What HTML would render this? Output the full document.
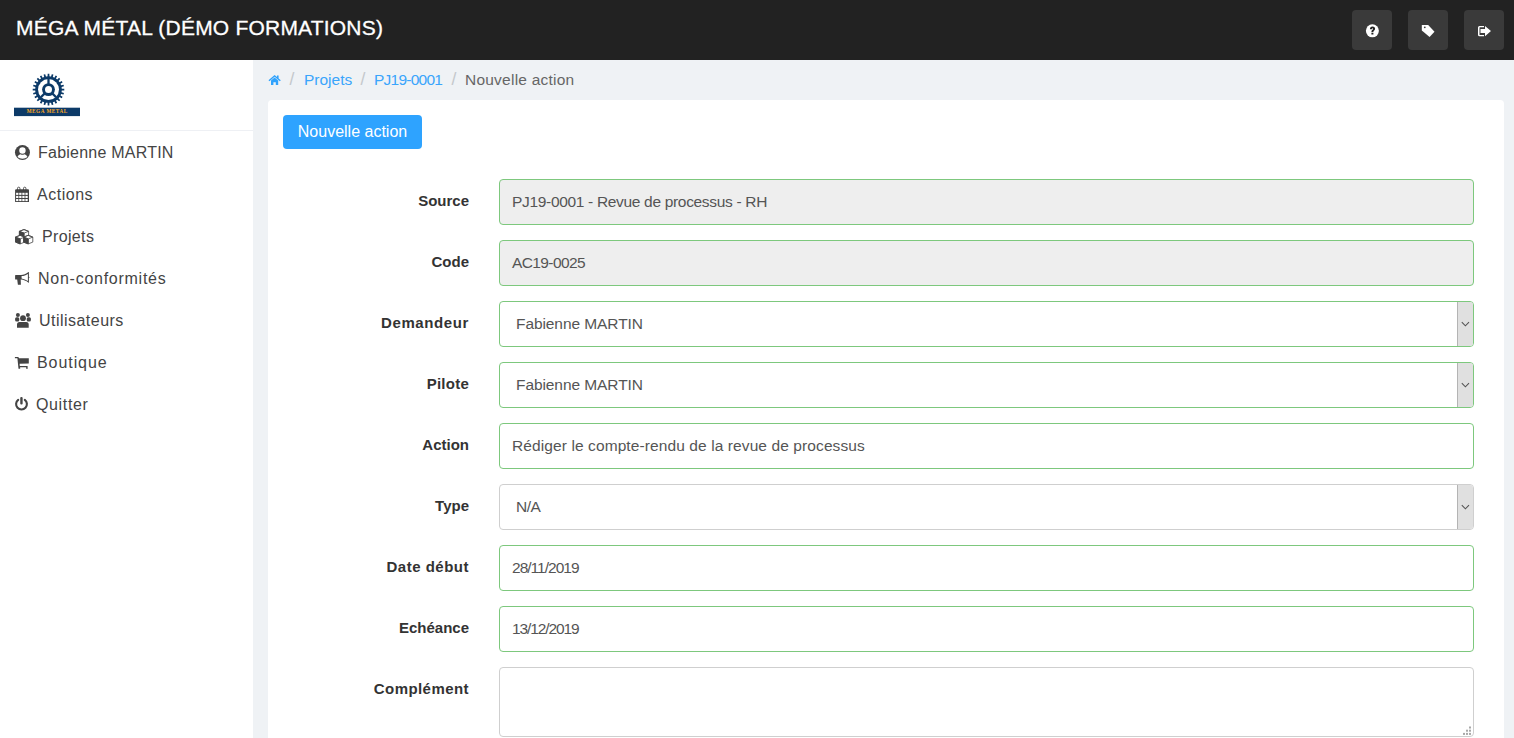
<!DOCTYPE html>
<html><head><meta charset="utf-8">
<style>
*{box-sizing:border-box;margin:0;padding:0}
html,body{width:1514px;height:738px;overflow:hidden}
body{font-family:"Liberation Sans",sans-serif;background:#eff2f5;position:relative;color:#555}
.ov{position:absolute;left:0;top:0;z-index:5}
.hdr{position:absolute;left:0;top:0;width:1514px;height:60px;background:#222;}
.hdr .title{position:absolute;left:16px;top:16px;font-size:21px;line-height:24px;color:#fff;white-space:nowrap;-webkit-text-stroke:0.3px #fff}
.hbtn{position:absolute;top:10px;width:40px;height:40px;background:#3a3a3a;border-radius:4px}
.side{position:absolute;left:0;top:60px;width:253px;height:678px;background:#fff}
.sep{position:absolute;left:0;top:70px;width:253px;height:1px;background:#eef0f4}
.mi{position:absolute;font-size:16px;line-height:20px;color:#444;white-space:nowrap}
.bc{position:absolute;top:70px;font-size:15.5px;line-height:20px;white-space:nowrap}
.bl{color:#3aa5fc}
.bs{color:#c4c8cc;font-size:17.5px;top:69px;line-height:20px}
.bcur{color:#666}
.card{position:absolute;left:268px;top:100px;width:1236px;height:700px;background:#fff;border-radius:4px}
.btn{position:absolute;left:283px;top:115px;width:139px;height:34px;background:#2ea3ff;border-radius:4px;color:#fff;font-size:16px;line-height:34px;text-align:center;white-space:nowrap}
.lbl{position:absolute;right:1045px;font-size:15px;font-weight:bold;color:#333;line-height:20px;white-space:nowrap;text-align:right}
.inp{position:absolute;left:499px;width:975px;height:46px;border:1px solid #7dc87d;border-radius:4px;background:#fff;font-size:15.5px;color:#555;line-height:20px;padding:12px 12px;white-space:nowrap}
.inp.ro{background:#eeeeee}
.inp.sel{padding-left:16px}
.inp.gray{border-color:#cfcfcf}
.arr{position:absolute;right:0;top:0;width:16px;height:44px;background:#e0e0e0;border-left:1px solid #b4b4b4;border-radius:0 3px 3px 0}
</style></head><body>
<div class="hdr">
  <div class="title" style="letter-spacing:0.21px">MÉGA MÉTAL (DÉMO FORMATIONS)</div>
  <div class="hbtn" style="left:1352px"></div>
  <div class="hbtn" style="left:1408px"></div>
  <div class="hbtn" style="left:1464px"></div>
</div>
<div class="side"><div class="sep"></div></div>
<div class="mi" style="top:143px;left:38px;letter-spacing:0.23px">Fabienne MARTIN</div>
<div class="mi" style="top:185px;left:37px;letter-spacing:0.52px">Actions</div>
<div class="mi" style="top:227px;left:42px;letter-spacing:0.35px">Projets</div>
<div class="mi" style="top:269px;left:38px;letter-spacing:0.74px">Non-conformités</div>
<div class="mi" style="top:311px;left:39px;letter-spacing:0.47px">Utilisateurs</div>
<div class="mi" style="top:353px;left:37px;letter-spacing:0.93px">Boutique</div>
<div class="mi" style="top:395px;left:36px;letter-spacing:0.64px">Quitter</div>

<div class="bc bs" style="left:289.5px">/</div>
<div class="bc bl" style="left:304px">Projets</div>
<div class="bc bs" style="left:360.5px">/</div>
<div class="bc bl" style="left:374px;letter-spacing:-0.76px">PJ19-0001</div>
<div class="bc bs" style="left:451.5px">/</div>
<div class="bc bcur" style="left:465px;letter-spacing:0.23px">Nouvelle action</div>
<div class="card"></div>
<div class="btn" style="letter-spacing:0px">Nouvelle action</div>

<div class="lbl" style="top:191px">Source</div>
<div class="inp ro" style="top:179px;letter-spacing:-0.32px">PJ19-0001 - Revue de processus - RH</div>
<div class="lbl" style="top:252px">Code</div>
<div class="inp ro" style="top:240px;letter-spacing:-0.61px">AC19-0025</div>
<div class="lbl" style="top:313px;letter-spacing:0.6px">Demandeur</div>
<div class="inp sel" style="top:301px;letter-spacing:-0.08px">Fabienne MARTIN<div class="arr"></div></div>
<div class="lbl" style="top:374px;letter-spacing:0.24px">Pilote</div>
<div class="inp sel" style="top:362px;letter-spacing:-0.08px">Fabienne MARTIN<div class="arr"></div></div>
<div class="lbl" style="top:435px">Action</div>
<div class="inp" style="top:423px;letter-spacing:0.1px">Rédiger le compte-rendu de la revue de processus</div>
<div class="lbl" style="top:496px">Type</div>
<div class="inp sel gray" style="top:484px;letter-spacing:-0.45px">N/A<div class="arr"></div></div>
<div class="lbl" style="top:557px;letter-spacing:0.5px">Date début</div>
<div class="inp" style="top:545px;letter-spacing:-0.98px">28/11/2019</div>
<div class="lbl" style="top:618px">Echéance</div>
<div class="inp" style="top:606px;letter-spacing:-1.11px">13/12/2019</div>
<div class="lbl" style="top:679px;letter-spacing:0.44px">Complément</div>
<div class="inp gray" style="top:667px;height:70px"></div>
<svg class="ov" width="1514" height="738" viewBox="0 0 1514 738">
<!-- logo -->
<path d="M46.76,76.41 L47.56,76.33 L47.67,73.82 L49.33,73.82 L49.44,76.33 L50.24,76.41 L51.03,76.54 L51.79,74.15 L53.38,74.57 L52.84,77.03 L53.59,77.31 L54.32,77.64 L55.67,75.52 L57.11,76.35 L55.95,78.58 L56.60,79.05 L57.22,79.55 L59.07,77.86 L60.24,79.03 L58.55,80.88 L59.05,81.50 L59.52,82.15 L61.75,80.99 L62.58,82.43 L60.46,83.78 L60.79,84.51 L61.07,85.26 L63.53,84.72 L63.95,86.31 L61.56,87.07 L61.69,87.86 L61.77,88.66 L64.28,88.77 L64.28,90.43 L61.77,90.54 L61.69,91.34 L61.56,92.13 L63.95,92.89 L63.53,94.48 L61.07,93.94 L60.79,94.69 L60.46,95.42 L62.58,96.77 L61.75,98.21 L59.52,97.05 L59.05,97.70 L58.55,98.32 L60.24,100.17 L59.07,101.34 L57.22,99.65 L56.60,100.15 L55.95,100.62 L57.11,102.85 L55.67,103.68 L54.32,101.56 L53.59,101.89 L52.84,102.17 L53.38,104.63 L51.79,105.05 L51.03,102.66 L50.24,102.79 L49.44,102.87 L49.33,105.38 L47.67,105.38 L47.56,102.87 L46.76,102.79 L45.97,102.66 L45.21,105.05 L43.62,104.63 L44.16,102.17 L43.41,101.89 L42.68,101.56 L41.33,103.68 L39.89,102.85 L41.05,100.62 L40.40,100.15 L39.78,99.65 L37.93,101.34 L36.76,100.17 L38.45,98.32 L37.95,97.70 L37.48,97.05 L35.25,98.21 L34.42,96.77 L36.54,95.42 L36.21,94.69 L35.93,93.94 L33.47,94.48 L33.05,92.89 L35.44,92.13 L35.31,91.34 L35.23,90.54 L32.72,90.43 L32.72,88.77 L35.23,88.66 L35.31,87.86 L35.44,87.07 L33.05,86.31 L33.47,84.72 L35.93,85.26 L36.21,84.51 L36.54,83.78 L34.42,82.43 L35.25,80.99 L37.48,82.15 L37.95,81.50 L38.45,80.88 L36.76,79.03 L37.93,77.86 L39.78,79.55 L40.40,79.05 L41.05,78.58 L39.89,76.35 L41.33,75.52 L42.68,77.64 L43.41,77.31 L44.16,77.03 L43.62,74.57 L45.21,74.15 L45.97,76.54Z" fill="#0c3a68"/>
<circle cx="48.5" cy="89.6" r="10.5" fill="#fff"/>
<g stroke="#0c3a68" stroke-width="2.3" stroke-linecap="butt">
<line x1="48.5" y1="89.6" x2="48.5" y2="78.5"/>
<line x1="48.5" y1="89.6" x2="40.86" y2="97.24"/>
<line x1="48.5" y1="89.6" x2="56.14" y2="97.24"/>
</g>
<circle cx="48.5" cy="89.6" r="6.4" fill="#0c3a68"/>
<circle cx="48.5" cy="89.6" r="3.5" fill="#fff"/>
<rect x="14" y="107.7" width="66" height="8.4" fill="#0c3a68"/>
<text x="47.2" y="113.2" font-family="Liberation Serif" font-weight="bold" font-size="6" fill="#ffa91f" text-anchor="middle" letter-spacing="0.6" textLength="41" lengthAdjust="spacingAndGlyphs">MEGA METAL</text>
<!-- header icons -->
<circle cx="1372.4" cy="30.8" r="6.5" fill="#fff"/>
<path d="M1369.9,29.3 Q1369.9,26.4 1372.5,26.4 Q1375.2,26.5 1375.1,28.8 Q1375,30.1 1373.9,30.8 Q1373.4,31.1 1373.4,32 L1371.4,32 Q1371.3,30.5 1372.4,29.8 Q1373,29.4 1373,28.9 Q1373,28.3 1372.4,28.3 Q1371.9,28.3 1371.9,29.3Z" fill="#222"/>
<rect x="1371.4" y="32.7" width="2" height="1.8" fill="#222"/>
<path d="M1421.8,25.4 Q1421.8,24.9 1422.3,24.9 L1428.2,24.9 L1434.5,31.7 L1429.6,37 L1421.8,30.4Z" fill="#fff"/>
<circle cx="1424.8" cy="27.3" r="0.9" fill="#3a3a3a"/>
<path d="M1478,27.5 Q1478,26 1479.5,26 L1484,26 L1484,27.2 L1479.8,27.2 Q1479.5,27.2 1479.5,27.5 L1479.5,34.7 Q1479.5,35 1479.8,35 L1484,35 L1484,36.2 L1479.5,36.2 Q1478,36.2 1478,34.7Z" fill="#fff"/>
<path d="M1480.5,29 L1485,29 L1485,26 L1491,31.1 L1485,36.2 L1485,33.1 L1480.5,33.1Z" fill="#fff"/>
<!-- sidebar icons -->
<g fill="#444">
<circle cx="22.45" cy="152.45" r="7.5"/>
<circle cx="22.45" cy="150.5" r="3.2" fill="#fff"/>
<path d="M17.4,157.1 Q18.6,154.4 20.6,154.3 Q22.4,155.3 24.3,154.3 Q26.3,154.4 27.5,157.1 Q25.3,158.7 22.45,158.7 Q19.6,158.7 17.4,157.1Z" fill="#fff"/>
<!-- calendar -->
<path d="M15.1,190.2 Q15.1,189.2 16.1,189.2 L28,189.2 Q29,189.2 29,190.2 L29,201.9 L15.1,201.9Z"/>
<rect x="17.5" y="187.2" width="2.4" height="4" rx="1.1" fill="none" stroke="#444" stroke-width="0.9"/>
<rect x="23.5" y="187.2" width="2.4" height="4" rx="1.1" fill="none" stroke="#444" stroke-width="0.9"/>
<g fill="#fff"><rect x="16.1" y="192.8" width="2.3" height="2.1"/><rect x="19.2" y="192.8" width="2.3" height="2.1"/><rect x="22.3" y="192.8" width="2.3" height="2.1"/><rect x="25.4" y="192.8" width="2.3" height="2.1"/><rect x="16.1" y="195.9" width="2.3" height="2.1"/><rect x="19.2" y="195.9" width="2.3" height="2.1"/><rect x="22.3" y="195.9" width="2.3" height="2.1"/><rect x="25.4" y="195.9" width="2.3" height="2.1"/><rect x="16.1" y="199.0" width="2.3" height="2.1"/><rect x="19.2" y="199.0" width="2.3" height="2.1"/><rect x="22.3" y="199.0" width="2.3" height="2.1"/><rect x="25.4" y="199.0" width="2.3" height="2.1"/></g>
<!-- cubes -->
<g stroke="#444" stroke-width="0.8" stroke-linejoin="round"><path d="M24.00,229.50 L28.60,231.30 L28.60,236.30 L24.00,238.10 L19.40,236.30 L19.40,231.30Z" fill="#fff"/><path d="M19.40,231.30 L24.00,233.10 L24.00,238.10 L19.40,236.30Z" fill="#444"/><path d="M19.40,231.30 L24.00,229.50 L28.60,231.30 L24.00,233.10Z M24.00,233.10 L24.00,238.10" fill="none"/><path d="M20.10,235.30 L24.70,237.10 L24.70,242.10 L20.10,243.90 L15.50,242.10 L15.50,237.10Z" fill="#fff"/><path d="M15.50,237.10 L20.10,238.90 L20.10,243.90 L15.50,242.10Z" fill="#444"/><path d="M15.50,237.10 L20.10,235.30 L24.70,237.10 L20.10,238.90Z M20.10,238.90 L20.10,243.90" fill="none"/><path d="M28.20,235.30 L32.80,237.10 L32.80,242.10 L28.20,243.90 L23.60,242.10 L23.60,237.10Z" fill="#fff"/><path d="M23.60,237.10 L28.20,238.90 L28.20,243.90 L23.60,242.10Z" fill="#444"/><path d="M23.60,237.10 L28.20,235.30 L32.80,237.10 L28.20,238.90Z M28.20,238.90 L28.20,243.90" fill="none"/></g>
<!-- bullhorn -->
<path d="M15.1,275.6 Q15.1,275 15.7,275 L21,275 L21,279.5 L20.7,279.5 L20.9,284.8 L17.9,284.8 L17.2,279.5 L15.7,279.5 Q15.1,279.5 15.1,278.9Z"/>
<path d="M21,275 C23.5,275 26,274 28.5,272 L28.9,272 L28.9,276.7 L29.9,277.2 L28.9,277.8 L28.9,282.7 L28.5,282.7 C26,280.7 23.5,279.6 21,279.5Z"/>
<path d="M21.6,276.1 C24,275.9 26,275.1 27.9,273.9 L27.9,280.9 C26,279.8 24,279 21.6,278.5Z" fill="#fff"/>
<!-- users -->
<circle cx="17.9" cy="315" r="2"/>
<circle cx="27.9" cy="315" r="2"/>
<circle cx="23" cy="318.2" r="2.9"/>
<rect x="15.1" y="317.2" width="4.2" height="4.3" rx="1.5"/>
<rect x="26.7" y="317.2" width="4.2" height="4.3" rx="1.5"/>
<path d="M17,327.8 L17,324.5 Q17,322 19.5,322 L26.2,322 Q28.7,322 28.7,324.5 L28.7,327.8Z"/>
<!-- cart -->
<path d="M14.9,357 L18.3,357 L19.1,358.3 L28.8,358.3 L28.8,363.5 L19.6,363.8 L19.8,365.9 L27.6,365.9 L27.6,367.2 L27.8,368.8 L26.1,368.8 L26.2,367.2 L20.1,367.2 L20.2,368.8 L18.5,368.8 L17.4,358.3 L14.9,358.3Z"/>
<!-- power -->
<path d="M18.2,399.9 A5.4,5.4 0 1 0 24.8,399.9" fill="none" stroke="#444" stroke-width="2.1" stroke-linecap="round"/>
<rect x="20.25" y="397" width="2.4" height="7.5" rx="1.1"/>
</g>
<!-- home -->
<path d="M268.5,80.2 L274.6,75 L280.8,80.2 L279.8,81.2 L274.6,76.8 L269.5,81.2Z M271,80.6 L274.6,77.6 L278.2,80.6 L278.2,85 L275.8,85 L275.8,82.2 L273.4,82.2 L273.4,85 L271,85Z M277,75.5 L278.6,75.5 L278.6,78.4 L277,77Z" fill="#2fa2fc"/>
<!-- selects arrows -->
<g fill="none" stroke="#555" stroke-width="1.1">
<path d="M1461.8,322.2 L1465.4,325.8 L1469,322.2"/>
<path d="M1461.8,383.2 L1465.4,386.8 L1469,383.2"/>
<path d="M1461.8,505.2 L1465.4,508.8 L1469,505.2"/>
</g>
<!-- textarea resize grip -->
<g fill="#a8a8a8"><rect x="1469" y="726.5" width="2" height="2"/><rect x="1466" y="729.7" width="2" height="2"/><rect x="1469" y="729.7" width="2" height="2"/><rect x="1463" y="732.9" width="2" height="2"/><rect x="1466" y="732.9" width="2" height="2"/><rect x="1469" y="732.9" width="2" height="2"/></g>
</svg>
</body></html>
